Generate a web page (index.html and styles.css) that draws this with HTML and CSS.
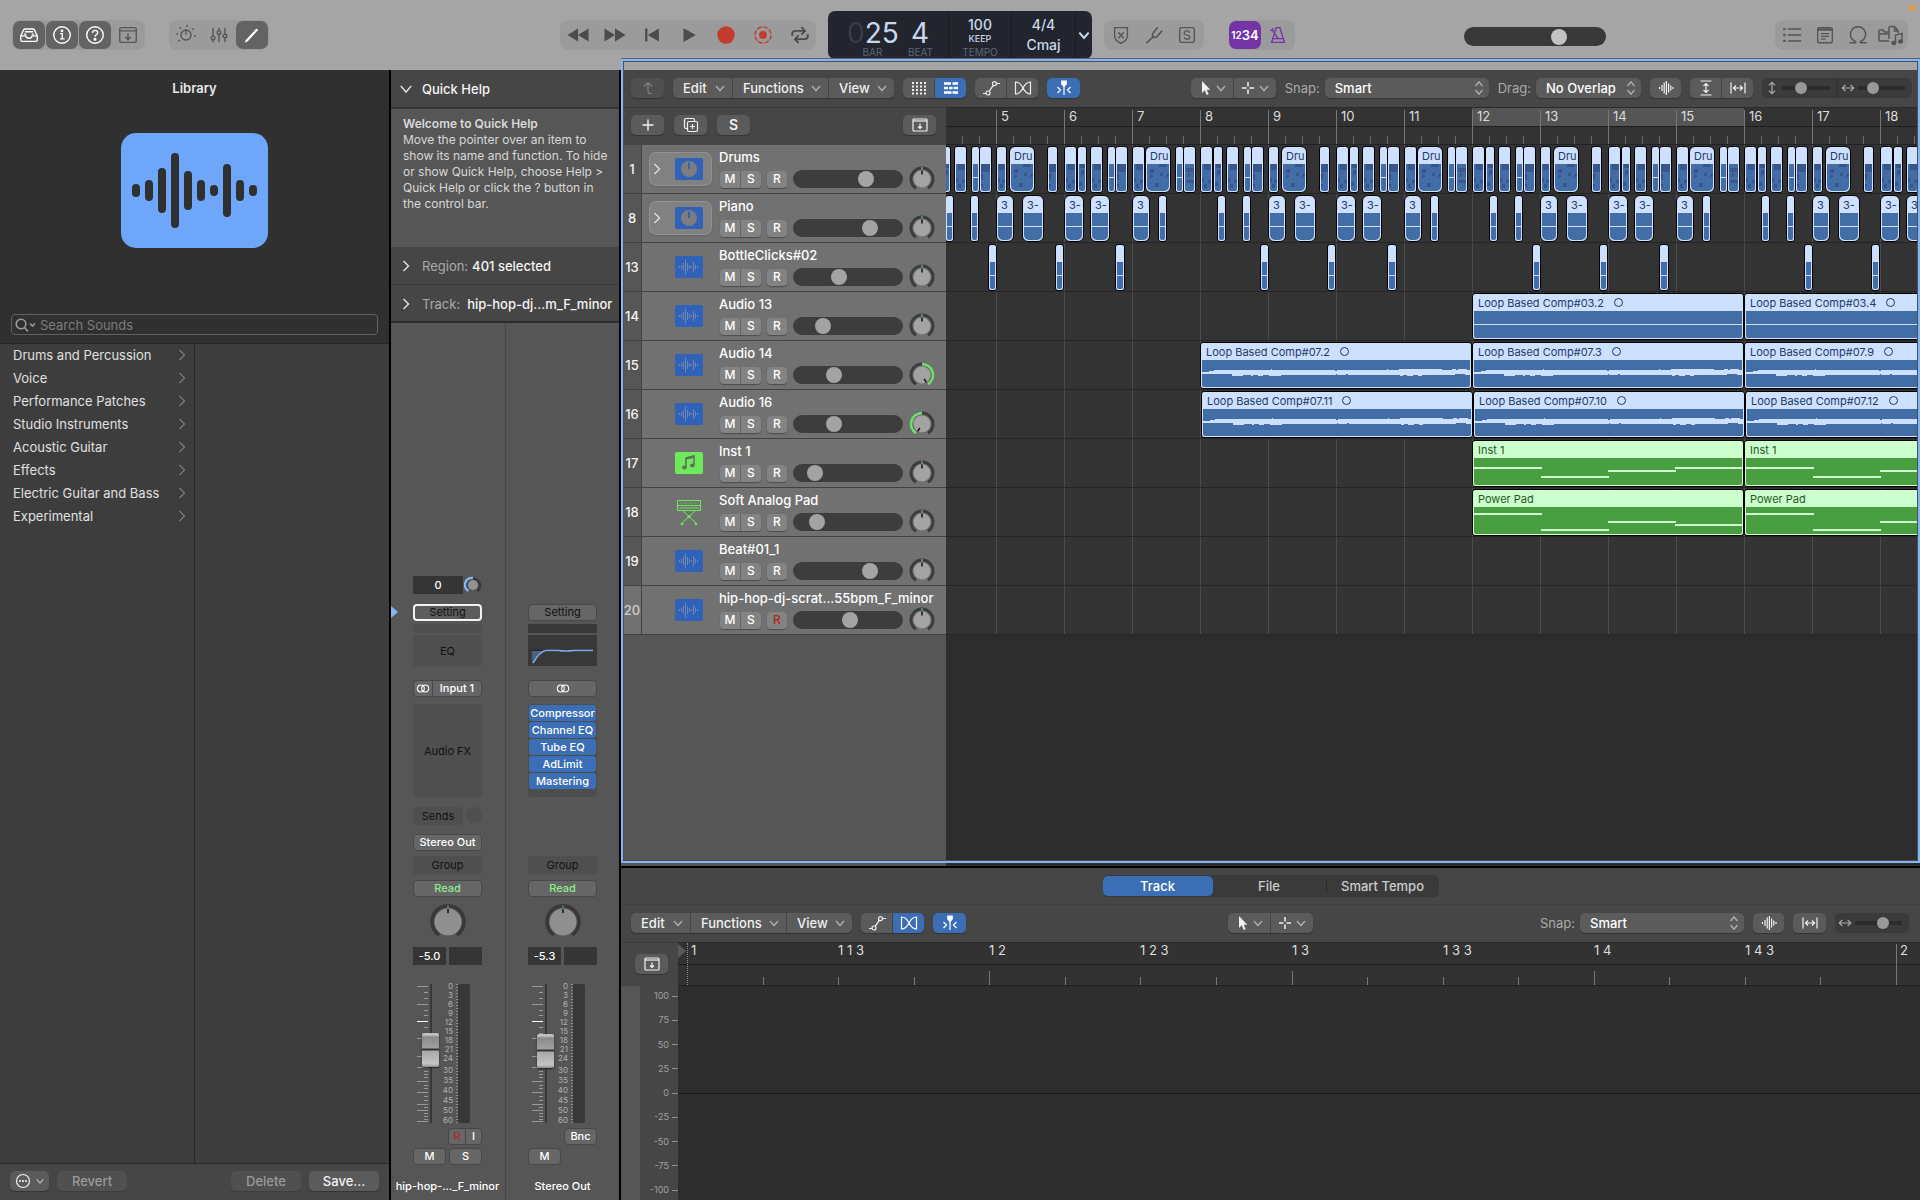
FILE: index.html
```html
<!DOCTYPE html>
<html lang="en">
<head>
<meta charset="utf-8">
<title>Studio - Tracks</title>
<link rel="stylesheet" href="styles.css">
</head>
<body>
<svg class="defs" aria-hidden="true">
  <symbol id="inbox" viewBox="0 0 24 24"><path d="M3 13 6 6.500Q6.500 5.500 7.500 5.500h9Q17.500 5.500 18 6.500L21 13v4.500q0 1.500-1.500 1.500h-15Q3 19 3 17.500ZM3 13h5.500q.5 2.500 3.500 2.500t3.500-2.500H21M7.500 8.500h9M6.500 11h2.500M15 11h2.500"/></symbol>
  <symbol id="info" viewBox="0 0 24 24"><circle cx="12" cy="12" r="9"/><path d="M10 10.500h2.300V16M9.800 16.200h5"/><circle cx="12" cy="7.500" r=".8" fill="currentColor"/></symbol>
  <symbol id="help" viewBox="0 0 24 24"><circle cx="12" cy="12" r="9"/><path d="M9.300 9.800q0-2.800 2.800-2.800t2.800 2.500q0 1.500-1.600 2.400-1.300.7-1.300 2"/><circle cx="12" cy="16.700" r=".9" fill="currentColor"/></symbol>
  <symbol id="tray" viewBox="0 0 24 24"><rect x="3" y="4" width="18" height="16" rx="2"/><path d="M3.500 7.500h17M12 10v7M9 14.300l3 3 3-3"/></symbol>
  <symbol id="smart" viewBox="0 0 24 24"><circle cx="12" cy="12" r="5.500"/><path d="M12 7v5"/><path stroke-dasharray="1.600 6.200" stroke-width="2" d="M5.200 18.800A9.800 9.800 0 1 1 18.800 18.800"/></symbol>
  <symbol id="mixer" viewBox="0 0 24 24"><path d="M5.500 4v9M5.500 17.500V20M12 4v3M12 11.500V20M18.500 4v7M18.500 15.500V20"/><circle cx="5.500" cy="15.200" r="2"/><circle cx="12" cy="9.200" r="2"/><circle cx="18.500" cy="13.200" r="2"/></symbol>
  <symbol id="pencil" viewBox="0 0 24 24"><path stroke-width="2.500" stroke-linecap="round" d="M6.500 18 17 6.500"/><path d="m5 20 1-2.500"/></symbol>
  <symbol id="rew" viewBox="0 0 24 24"><path fill="currentColor" stroke="none" d="M12 5v14L.5 12ZM23.500 5v14L12 12Z"/></symbol>
  <symbol id="ffw" viewBox="0 0 24 24"><path fill="currentColor" stroke="none" d="M12 5v14l11.500-7ZM.5 5v14L12 12Z"/></symbol>
  <symbol id="start" viewBox="0 0 24 24"><path fill="currentColor" stroke="none" d="M4.500 5h2.500v14H4.500ZM19.500 5v14L7.500 12Z"/></symbol>
  <symbol id="play" viewBox="0 0 24 24"><path fill="currentColor" stroke="none" d="M6 4.500v15L19.500 12Z"/></symbol>
  <symbol id="rec" viewBox="0 0 24 24"><circle cx="12" cy="12" r="9.500" fill="#c23b2e" stroke="none"/></symbol>
  <symbol id="rec2" viewBox="0 0 24 24"><circle cx="12" cy="12" r="4.300" fill="#c23b2e" stroke="none"/><circle cx="12" cy="12" r="8.800" stroke="#c23b2e" stroke-dasharray="5.200 1.700"/></symbol>
  <symbol id="cycle" viewBox="0 0 24 24"><path stroke-width="2" d="M3.500 13v-2q0-3.500 3.500-3.500h10M13.500 3.500l4 4-4 4M20.500 11v2q0 3.500-3.500 3.500H7M10.500 12.500l-4 4 4 4"/></symbol>
  <symbol id="down" viewBox="0 0 12 12"><path d="m2 4 4 4.500L10 4"/></symbol>
  <symbol id="fold-down" viewBox="0 0 12 12"><path d="m.8 3 5.200 6 5.200-6"/></symbol>
  <symbol id="right" viewBox="0 0 12 12"><path d="m3.500 1 5 5-5 5"/></symbol>
  <symbol id="updown" viewBox="0 0 12 16"><path d="m2.500 6 3.500-4 3.500 4M2.500 10l3.500 4 3.500-4"/></symbol>
  <symbol id="shield" viewBox="0 0 24 24"><path d="M5 4h14v9q0 5-7 8-7-3-7-8ZM9 9l6 6.500M15 9l-6 6.500"/></symbol>
  <symbol id="fork" viewBox="0 0 24 24"><path stroke-width="1.800" d="M16 3.500 11 10q-1.500 2.500.3 4t4-.3L21 7M11 14l-7.500 7"/></symbol>
  <symbol id="solo" viewBox="0 0 24 24"><rect x="4" y="4" width="16" height="16" rx="2"/><path d="M15 9.500q-.5-2-3-2t-3 2 3 2.600 3 2.600-3 2-3.200-2.200"/></symbol>
  <symbol id="metro" viewBox="0 0 24 24"><path d="M10 4h4l5 16H5ZM6.500 16h11M12 16 5.500 6M4 7.500 7 5"/></symbol>
  <symbol id="list" viewBox="0 0 24 24"><path d="M7.500 5.500H22M7.500 12H22M7.500 18.500H22"/><path stroke-width="2.500" d="M2.500 5.500H5M2.500 12H5M2.500 18.500H5"/></symbol>
  <symbol id="note" viewBox="0 0 24 24"><rect x="4" y="4" width="16" height="16.500" rx="2"/><path stroke-width="2.600" d="M4 6h16"/><path d="M7.500 10.500h9M7.500 13.500h9M7.500 16.500h5"/></symbol>
  <symbol id="loop" viewBox="0 0 24 24"><path d="M2.500 20.500H8.500q1.500 0 1-1.300A8.300 8.300 0 1 1 14.500 19.200q-.5 1.300 1 1.300h6"/></symbol>
  <symbol id="media" viewBox="0 0 28 24"><path d="M12 18H3Q2 18 2 17V8q0-1 1-1h3l1.500 2H12M2 11h10M12 16V5q0-1.500 1.500-1.500h4L21 7.500V10M17.500 3.500V8H21"/><path d="M18.500 20v-8l6.500-1.500V18"/><ellipse cx="16.800" cy="20" rx="1.800" ry="1.500" fill="currentColor"/><ellipse cx="23.500" cy="18.500" rx="1.800" ry="1.500" fill="currentColor"/></symbol>
  <symbol id="uparrow" viewBox="0 0 16 16"><path d="M12 13.500H10Q8 13.500 8 11.500V2.500M4 6.500l4-4 4 4"/></symbol>
  <symbol id="gridv" viewBox="0 0 16 16"><path stroke-width="2" stroke-dasharray="2 2" d="M1 3h15M1 6.500h15M1 10h15M1 13.500h15"/></symbol>
  <symbol id="rows" viewBox="0 0 16 16"><path stroke-width="2.600" d="M1 3.500h7M9.500 3.500H15M1 8h4M6 8h3.500M10.500 8H15M1 12.500h7.500M9.500 12.500H15"/></symbol>
  <symbol id="autom" viewBox="0 0 18 16"><path d="M1 13.500h3M7.200 11.400l4-6M14.500 3.500H18"/><circle cx="6" cy="13" r="2"/><circle cx="12.500" cy="3.700" r="2"/></symbol>
  <symbol id="flex" viewBox="0 0 18 16"><path d="M1.500 2v12Q6 14 9 8t7.500-6v12Q12 14 9 8T1.500 2Z"/></symbol>
  <symbol id="catch" viewBox="0 0 16 16"><path fill="currentColor" d="M5.800 1.200h4.400V4L8 6.500 5.800 4Z"/><path d="M8 5v10M1.500 7l3 3-3 3M14.500 7l-3 3 3 3"/></symbol>
  <symbol id="arrow" viewBox="0 0 16 16"><path fill="currentColor" stroke="none" d="M5 1v12l2.800-2.700L9.700 15l2-.8-2-4.500h3.600Z"/></symbol>
  <symbol id="cross" viewBox="0 0 16 16"><path stroke-width="1.500" d="M8 2v4.500M8 9.500V14M2 8h4.500M9.500 8H14"/></symbol>
  <symbol id="wave" viewBox="0 0 16 16"><path d="M1.500 7v2M4 5v6M6.200 2.500v11M8.400 1v14M10.600 3.500v9M12.800 5.500v5M15 7v2"/></symbol>
  <symbol id="vfit" viewBox="0 0 16 16"><path d="M2.500 1h11M2.500 15h11M8 3.500v9M5.500 6 8 3.500 10.500 6M5.500 10 8 12.500l2.500-2.500"/></symbol>
  <symbol id="hfit" viewBox="0 0 16 16"><path d="M1 2.500v11M15 2.500v11M3.500 8h9M6 5.500 3.500 8 6 10.500M10 5.500l2.500 2.500-2.500 2.500"/></symbol>
  <symbol id="vzoom" viewBox="0 0 16 16"><path stroke-width="1.400" d="M8 2v12M4.500 5 8 1.500 11.500 5M4.500 11 8 14.500l3.500-3.500"/></symbol>
  <symbol id="hzoom" viewBox="0 0 16 16"><path stroke-width="1.400" d="M2 8h12M5 4.500 1.500 8 5 11.500M11 4.500l3.500 3.500-3.500 3.500"/></symbol>
  <symbol id="plus" viewBox="0 0 16 16"><path stroke-width="1.400" d="M8 2.500v11M2.500 8h11"/></symbol>
  <symbol id="dup" viewBox="0 0 16 16"><path d="M4 11.500H3Q1.500 11.500 1.500 10V3Q1.500 1.500 3 1.500h7Q11.500 1.500 11.500 3v1M9.500 7v5M7 9.500h5"/><rect x="4.500" y="4.500" width="10" height="10" rx="1.500"/></symbol>
  <symbol id="trayw" viewBox="0 0 16 14"><rect x="1" y="1" width="14" height="12" rx="1"/><path d="M1 3h14" stroke-width="2" opacity=".6"/><path d="M8 5.500v5M6 8.500l2 2 2-2"/></symbol>
  <symbol id="search" viewBox="0 0 22 16"><circle cx="7" cy="7" r="4.800"/><path d="m10.500 10.500 3.500 4M16 6.500l2.500 2.500L21 6.500"/></symbol>
  <symbol id="more" viewBox="0 0 16 16"><circle cx="8" cy="8" r="6.500"/><path stroke-width="1.800" stroke-dasharray="1.600 1.400" d="M4.200 8h8"/></symbol>
  <symbol id="stereo" viewBox="0 0 16 10"><circle cx="5.500" cy="5" r="4"/><circle cx="10.500" cy="5" r="4"/></symbol>
  <symbol id="t-stack" viewBox="0 0 28 22"><rect width="28" height="22" rx="2" fill="#2f62b8" stroke="none"/><circle cx="14" cy="11" r="8" fill="#7d7d7d" stroke="none"/><path stroke="#2f62b8" stroke-width="2" d="M14 4.500V11"/></symbol>
  <symbol id="t-audio" viewBox="0 0 28 22"><rect width="28" height="22" rx="2" fill="#2f62b8" stroke="none"/><path stroke="#7387ad" d="M4.500 10v2M6.500 9v4M8.500 7v8M10.500 3.500v15M12.500 7v8M14.500 9v4M16.500 10v2M18.500 6v10M20.500 8.500v5M22.500 10v2"/></symbol>
  <symbol id="t-inst" viewBox="0 0 28 22"><rect width="28" height="22" rx="2" fill="#6dea5a" stroke="none"/><path stroke="#64705f" stroke-width="1.600" d="M11 15.500V6l8-2v9.500"/><path stroke="#64705f" stroke-width="2.500" d="m11 6.500 8-2"/><ellipse cx="9.300" cy="15.500" rx="2.300" ry="1.900" fill="#64705f" stroke="none"/><ellipse cx="17.300" cy="13.500" rx="2.300" ry="1.900" fill="#64705f" stroke="none"/></symbol>
  <symbol id="t-keys" viewBox="0 0 28 28"><g stroke="#6dea5a"><path d="M2.500 2.500h23v10h-23ZM2.500 7.500h23M4 10h20"/><path stroke-dasharray="1 1.500" d="M5 5h18"/><path d="m8 13 13 12M20 13 7 25"/></g><circle cx="14" cy="18.500" r="1.500" fill="#6dea5a" stroke="none"/><circle cx="7" cy="26" r="1.300" fill="#6dea5a" stroke="none"/><circle cx="21" cy="26" r="1.300" fill="#6dea5a" stroke="none"/></symbol>
  <symbol id="waveform" viewBox="0 0 270 26"><path fill="#cde0fe" stroke="none" d="M0 12h7v-1h5v-1h57v-1h1v1h63v1h2v-1h50v-1h1v1h11v-1h43v1h10v-1h4v1h2v-1h9v1h3v2h2v2h-2v1h-5v-1h-10v1h-33v1h-4v-1h-5v1h-6v-1h-4v1h-3v-1h-52v-1h-2v1h-9v-1h-1v1h-55v1h-12v-1h-6v1h-5v-1h-5v1h-2v-1h-8v1h-11v-2H0Z"/></symbol>
</svg>

<header class="control-bar">
  <div class="bar-side bar-left">
    <div class="tool-groups">
      <div class="cluster">
        <button class="cbtn on" aria-label="Library"><svg><use href="#inbox"/></svg></button>
        <button class="cbtn on" aria-label="Inspector"><svg><use href="#info"/></svg></button>
        <button class="cbtn on" aria-label="Quick Help"><svg><use href="#help"/></svg></button>
        <button class="cbtn" aria-label="Toolbar"><svg><use href="#tray"/></svg></button>
      </div>
      <div class="cluster">
        <button class="cbtn" aria-label="Smart Controls"><svg><use href="#smart"/></svg></button>
        <button class="cbtn" aria-label="Mixer"><svg><use href="#mixer"/></svg></button>
        <button class="cbtn on" aria-label="Editors"><svg><use href="#pencil"/></svg></button>
      </div>
    </div>
    <div class="cluster transport">
      <button class="cbtn" aria-label="Rewind"><svg><use href="#rew"/></svg></button>
      <button class="cbtn" aria-label="Forward"><svg><use href="#ffw"/></svg></button>
      <button class="cbtn" aria-label="Go to beginning"><svg><use href="#start"/></svg></button>
      <button class="cbtn" aria-label="Play"><svg><use href="#play"/></svg></button>
      <button class="cbtn" aria-label="Record"><svg><use href="#rec"/></svg></button>
      <button class="cbtn" aria-label="Capture recording"><svg><use href="#rec2"/></svg></button>
      <button class="cbtn" aria-label="Cycle"><svg><use href="#cycle"/></svg></button>
    </div>
  </div>
  <div class="lcd">
    <div class="lcd-pos">
      <span class="digits"><span class="ghost">0</span>25</span><span class="digits">4</span>
      <span class="cap">BAR</span><span class="cap">BEAT</span>
    </div>
    <div class="lcd-cell"><span class="mid">100</span><span class="keep">KEEP</span><span class="cap">TEMPO</span></div>
    <div class="lcd-cell sig"><span class="mid">4/4</span><span class="mid">Cmaj</span></div>
    <button class="lcd-more" aria-label="Display mode"><svg><use href="#down"/></svg></button>
  </div>
  <div class="bar-side">
    <div class="cluster trio">
      <button class="cbtn" aria-label="Replace"><svg><use href="#shield"/></svg></button>
      <button class="cbtn" aria-label="Tuner"><svg><use href="#fork"/></svg></button>
      <button class="cbtn" aria-label="Solo"><svg><use href="#solo"/></svg></button>
    </div>
    <div class="cluster count">
      <button class="cbtn countin" aria-label="Count-in"><small>12</small>34</button>
      <button class="cbtn metro" aria-label="Metronome"><svg><use href="#metro"/></svg></button>
    </div>
    <input class="master" type="range" min="0" max="100" value="70" aria-label="Master volume">
    <div class="cluster right-tools">
      <button class="cbtn" aria-label="List editors"><svg><use href="#list"/></svg></button>
      <button class="cbtn" aria-label="Note pads"><svg><use href="#note"/></svg></button>
      <button class="cbtn" aria-label="Loop browser"><svg><use href="#loop"/></svg></button>
      <button class="cbtn" aria-label="Browsers"><svg><use href="#media"/></svg></button>
    </div>
  </div>
  <span class="mic-dot"></span>
</header>

<main class="workspace">
  <aside class="library">
    <h2>Library</h2>
    <svg class="patch-art" viewBox="0 0 147 115" aria-hidden="true"><rect width="147" height="115" rx="15" fill="#6ea6fa"/><g stroke="#303030" stroke-width="8" stroke-linecap="round"><path d="M15 55v5M28 51v13M41 39v37M54 24v67M67 42v31M80 51v13M93 56v3M106 35v45M119 51v13M132 56v3"/></g></svg>
    <label class="search"><svg><use href="#search"/></svg><input type="search" placeholder="Search Sounds" aria-label="Search Sounds"></label>
    <div class="browser">
      <ul class="cats">
        <li><a href="#">Drums and Percussion<svg><use href="#right"/></svg></a></li>
        <li><a href="#">Voice<svg><use href="#right"/></svg></a></li>
        <li><a href="#">Performance Patches<svg><use href="#right"/></svg></a></li>
        <li><a href="#">Studio Instruments<svg><use href="#right"/></svg></a></li>
        <li><a href="#">Acoustic Guitar<svg><use href="#right"/></svg></a></li>
        <li><a href="#">Effects<svg><use href="#right"/></svg></a></li>
        <li><a href="#">Electric Guitar and Bass<svg><use href="#right"/></svg></a></li>
        <li><a href="#">Experimental<svg><use href="#right"/></svg></a></li>
      </ul>
    </div>
    <footer class="lib-foot">
      <button class="btn more" aria-label="Actions"><svg class="i16"><use href="#more"/></svg><svg class="i12"><use href="#down"/></svg></button>
      <button class="btn wide" disabled>Revert</button>
      <button class="btn wide push" disabled>Delete</button>
      <button class="btn wide">Save...</button>
    </footer>
  </aside>

  <aside class="inspector">
    <section class="fold"><svg><use href="#fold-down"/></svg><b>Quick Help</b></section>
    <section class="help-text"><b>Welcome to Quick Help</b><br>Move the pointer over an item to show its name and function. To hide or show Quick Help, choose Help &gt; Quick Help or click the ? button in the control bar.</section>
    <section class="fold"><svg><use href="#right"/></svg><span>Region:</span><b>401 selected</b></section>
    <section class="fold last"><svg><use href="#right"/></svg><span>Track:</span><b class="tname">hip-hop-dj...m_F_minor</b></section>
    <div class="strips">
      <div class="strip">
        <div class="row gain-row"><span class="val gain">0</span><svg class="mini" viewBox="0 0 18 18"><path d="M4.500 15A7 7 0 1 1 13.500 15" stroke="#383838"/><path d="M4.500 15A7 7 0 0 1 9 2" stroke="#84b4f4"/><circle cx="9" cy="9" r="5" fill="#929292"/></svg></div>
        <button class="sbtn setting focus">Setting</button>
        <div class="thin"></div>
        <button class="well eq">EQ</button>
        <div class="row io"><button class="sbtn fmt" aria-label="Mono or stereo"><svg><use href="#stereo"/></svg></button><button class="sbtn input">Input 1</button></div>
        <button class="well fx">Audio FX</button>
        <div class="row sends"><button class="well send">Sends</button><span class="send-knob"></span></div>
        <button class="sbtn out">Stereo Out</button>
        <button class="well group">Group</button>
        <button class="sbtn read">Read</button>
        <svg class="pan" viewBox="0 0 36 36"><use href="#pan"/></svg>
        <div class="row vals"><span class="val">-5.0</span><span class="val"></span></div>
        <div class="fader" data-level="56"></div>
        <div class="row pair ri"><button class="sbtn rec">R</button><button class="sbtn">I</button></div>
        <div class="row pair ms"><button class="sbtn">M</button><button class="sbtn">S</button></div>
        <div class="sname">hip-hop-..._F_minor</div>
      </div>
      <div class="strip">
        <div class="row gain-row"></div>
        <button class="sbtn setting">Setting</button>
        <div class="thin dark"></div>
        <svg class="eq curve" viewBox="0 0 69 31"><path d="M4 16h61" stroke="#111"/><path d="M4 28V16h13Q10 18 4 28Z" fill="#4a6384"/><path d="M5 28Q12 16 18 15.500h12q8 1 16 0h19" stroke="#7eaef0" fill="none" stroke-width="1.500"/></svg>
        <button class="sbtn io" aria-label="Stereo"><svg><use href="#stereo"/></svg></button>
        <div class="fx inserts"><button>Compressor</button><button>Channel EQ</button><button>Tube EQ</button><button>AdLimit</button><button>Mastering</button></div>
        <div class="row sends"></div>
        <div class="out"></div>
        <button class="well group">Group</button>
        <button class="sbtn read">Read</button>
        <svg class="pan" viewBox="0 0 36 36"><use href="#pan"/></svg>
        <div class="row vals"><span class="val">-5.3</span><span class="val"></span></div>
        <div class="fader" data-level="55"></div>
        <div class="row pair ri end"><button class="sbtn">Bnc</button></div>
        <div class="row pair ms"><button class="sbtn">M</button></div>
        <div class="sname">Stereo Out</div>
      </div>
    </div>
  </aside>
  <svg class="defs"><symbol id="pan" viewBox="0 0 36 36"><path d="M9 31A16 16 0 1 1 27 31" stroke="#383838" stroke-width="3.500"/><circle cx="18" cy="18" r="13.500" fill="#8f8f8f" stroke="none"/><path d="M18 1v4" stroke="#5fa45f"/><path d="M18 5v4" stroke="#111" stroke-width="1.500"/></symbol></svg>

  <div class="content">
    <section class="tracks-pane">
      <div class="toolbar">
        <button class="btn sq dim" aria-label="Up"><svg class="i16"><use href="#uparrow"/></svg></button>
        <div class="seg menus"><button class="m1">Edit<svg class="i12"><use href="#down"/></svg></button><button class="m2">Functions<svg class="i12"><use href="#down"/></svg></button><button class="m3">View<svg class="i12"><use href="#down"/></svg></button></div>
        <div class="seg duo"><button aria-label="Grid view"><svg class="i16"><use href="#gridv"/></svg></button><button class="blue" aria-label="Track view"><svg class="i16"><use href="#rows"/></svg></button></div>
        <div class="seg duo"><button aria-label="Automation"><svg class="i18"><use href="#autom"/></svg></button><button aria-label="Flex"><svg class="i18"><use href="#flex"/></svg></button></div>
        <button class="btn sq blue" aria-label="Catch playhead"><svg class="i16"><use href="#catch"/></svg></button>
        <div class="seg tools push"><button aria-label="Pointer tool"><svg class="i16"><use href="#arrow"/></svg><svg class="i12"><use href="#down"/></svg></button><button aria-label="Alternate tool"><svg class="i16"><use href="#cross"/></svg><svg class="i12"><use href="#down"/></svg></button></div>
        <div class="field"><label for="snap1">Snap:</label><span class="sel wide-sel"><select id="snap1"><option>Smart</option></select><svg><use href="#updown"/></svg></span></div>
        <div class="field"><label for="drag">Drag:</label><span class="sel"><select id="drag"><option>No Overlap</option></select><svg><use href="#updown"/></svg></span></div>
        <button class="btn sq31" aria-label="Waveform zoom"><svg class="i16"><use href="#wave"/></svg></button>
        <div class="seg duo"><button aria-label="Fit vertically"><svg class="i16"><use href="#vfit"/></svg></button><button aria-label="Fit horizontally"><svg class="i16"><use href="#hfit"/></svg></button></div>
        <div class="zoom"><span><svg><use href="#vzoom"/></svg><input type="range" value="36" aria-label="Vertical zoom"></span><span><svg><use href="#hzoom"/></svg><input type="range" value="26" aria-label="Horizontal zoom"></span></div>
      </div>
      <div class="arrange">
        <div class="heads">
          <div class="head-tools">
            <button class="btn sq" aria-label="Add track"><svg class="i16"><use href="#plus"/></svg></button>
            <button class="btn sq" aria-label="Duplicate track"><svg class="i16"><use href="#dup"/></svg></button>
            <button class="btn sq solo">S</button>
            <button class="btn sq push" aria-label="Header options"><svg class="i16"><use href="#trayw"/></svg></button>
          </div>
          <div id="heads"></div>
        </div>
        <div class="timeline">
          <div class="ruler" id="ruler"></div>
          <div class="lanes" id="lanes"></div>
        </div>
      </div>
    </section>

    <section class="editor">
      <div class="tabs"><div class="tabset"><button class="active">Track</button><button>File</button><button>Smart Tempo</button></div></div>
      <div class="toolbar ed-bar">
        <div class="side">
          <div class="seg menus"><button class="m1">Edit<svg class="i12"><use href="#down"/></svg></button><button class="m2">Functions<svg class="i12"><use href="#down"/></svg></button><button class="m3">View<svg class="i12"><use href="#down"/></svg></button></div>
          <div class="seg duo"><button aria-label="Automation"><svg class="i18"><use href="#autom"/></svg></button><button class="blue" aria-label="Flex"><svg class="i18"><use href="#flex"/></svg></button></div>
          <button class="btn sq blue" aria-label="Catch playhead"><svg class="i16"><use href="#catch"/></svg></button>
        </div>
        <div class="seg tools"><button aria-label="Pointer tool"><svg class="i16"><use href="#arrow"/></svg><svg class="i12"><use href="#down"/></svg></button><button aria-label="Alternate tool"><svg class="i16"><use href="#cross"/></svg><svg class="i12"><use href="#down"/></svg></button></div>
        <div class="side end">
          <div class="field"><label for="snap2">Snap:</label><span class="sel wide-sel"><select id="snap2"><option>Smart</option></select><svg><use href="#updown"/></svg></span></div>
          <button class="btn sq31" aria-label="Waveform zoom"><svg class="i16"><use href="#wave"/></svg></button>
          <button class="btn sq" aria-label="Fit horizontally"><svg class="i16"><use href="#hfit"/></svg></button>
          <div class="zoom one"><span><svg><use href="#hzoom"/></svg><input type="range" value="62" aria-label="Horizontal zoom"></span></div>
        </div>
      </div>
      <div class="ed-grid">
        <div class="ed-corner"><button class="btn sq" aria-label="Header options"><svg class="i16"><use href="#trayw"/></svg></button></div>
        <div class="ed-ruler" id="edruler"></div>
        <div class="ed-scale"><ol id="edscale"></ol></div>
        <div class="ed-wave"></div>
      </div>
    </section>
  </div>
</main>
<script src="script.js"></script>
</body>
</html>
```
FILE: styles.css
```css
* { box-sizing: border-box; }
body { margin: 0; min-height: 100vh; display: flex; flex-direction: column; background: #000; color: #e4e4e4; font: 13px/16px Inter, "Liberation Sans", sans-serif; overflow: hidden; }
button, input, select { font: inherit; color: inherit; margin: 0; padding: 0; border: 0; background: none; }
button { display: flex; align-items: center; justify-content: center; white-space: nowrap; }
svg { display: block; flex: none; fill: none; stroke: currentColor; }
.defs { position: absolute; width: 0; height: 0; }
.push { margin-left: auto; }
.i12 { width: 12px; height: 12px; stroke-width: 1.5; }
.i16 { width: 16px; height: 16px; stroke-width: 1.2; }
.i18 { width: 18px; height: 16px; stroke-width: 1.2; }

/* Control bar */
.control-bar { position: relative; height: 70px; background: #a5a5a5; display: grid; grid-template-columns: 1fr 264px 1fr; gap: 12px; align-items: center; padding: 0 12px; }
.bar-side { display: flex; align-items: center; min-width: 0; }
.bar-left { justify-content: space-between; }
.tool-groups { display: flex; gap: 24px; }
.cluster { display: flex; align-items: center; height: 30px; border-radius: 8px; background: #9b9b9b; gap: 1px; padding: 1px; color: #555; }
.cbtn { width: 32px; height: 28px; border-radius: 7px; flex: none; }
.cbtn svg { width: 22px; height: 22px; stroke-width: 1.5; }
.cbtn.on { background: #636363; color: #fff; }
.transport { width: 256px; gap: 5px; padding: 0 0 0 2px; color: #4c4c4c; }
.transport svg { width: 22px; height: 22px; }
.trio { width: 100px; }
.count { margin-left: 25px; width: 66px; padding-left: 0; }
.countin { background: #7434a6; color: #fff; font-weight: 600; }
.countin small { font-size: 10px; }
.metro { color: #7434a6; }
.master { appearance: none; width: 142px; height: 19px; border-radius: 10px; background: #393939; margin: 3px auto 0; padding: 0 2px; }
.master::-webkit-slider-thumb { appearance: none; width: 16px; height: 16px; border-radius: 50%; background: #c2c2c2; }
.right-tools { width: 133px; }
.right-tools .cbtn:last-child svg { width: 28px; height: 24px; }
.mic-dot { position: absolute; right: 5px; top: 5px; width: 6px; height: 6px; border-radius: 50%; background: #e8993a; }
.lcd { height: 48px; border-radius: 7px; background: #22252e; display: grid; grid-template-columns: 120px 63px 64px 17px; color: #c8d8ec; overflow: hidden; }
.lcd > * + * { border-left: 1px solid #181a21; }
.lcd-pos { display: grid; grid-template: 34px 13px / 51px 24px; column-gap: 10px; padding-left: 19px; text-align: center; }
.digits { font-size: 28px; line-height: 44px; text-align: center; white-space: nowrap; }
.ghost { color: #383c48; }
.cap { font-size: 10px; line-height: 14px; color: #5b6678; }
.lcd-cell { display: flex; flex-direction: column; align-items: center; padding-top: 5px; }
.mid { font-size: 14px; line-height: 17px; font-weight: 500; }
.keep { font-size: 9px; line-height: 12px; font-weight: 500; }
.sig { gap: 3px; }
.lcd-more svg { width: 14px; height: 14px; stroke-width: 1.8; }

.workspace { flex: 1; display: grid; grid-template-columns: 389px 228px minmax(0, 1fr); column-gap: 2px; }

/* Library */
.library { background: #303030; display: flex; flex-direction: column; }
h2 { margin: 10px 0 37px; font-size: 13px; line-height: 16px; font-weight: 600; text-align: center; color: #e8e8e8; }
.patch-art { width: 147px; height: 115px; align-self: center; stroke: none; }
.search { margin: 66px 11px 8px; height: 21px; border: 1px solid #606060; border-radius: 4px; display: flex; align-items: center; gap: 4px; padding: 0 2px; color: #9a9a9a; }
.search svg { width: 22px; height: 16px; stroke-width: 1.6; }
.search input { flex: 1; outline: 0; }
.search input::placeholder { color: #7c7c7c; opacity: 1; }
.browser { flex: 1; background: #3d3d3d; border-top: 1px solid #272727; display: flex; }
.cats { list-style: none; margin: 0; padding: 0 6px 0 13px; width: 195px; border-right: 1px solid #272727; }
.cats a { display: flex; justify-content: space-between; align-items: center; height: 23px; padding-bottom: 2px; color: #e0e0e0; text-decoration: none; white-space: nowrap; }
.cats svg { width: 12px; height: 14px; stroke: #a8a8a8; }
.lib-foot { height: 37px; background: #464646; border-top: 1px solid #2a2a2a; display: flex; align-items: center; gap: 8px; padding: 0 10px 2px; }
.btn { height: 20px; border-radius: 5px; background: #5b5b5b; box-shadow: 0 1px 1px #333; color: #f2f2f2; flex: none; }
.btn.more { width: 39px; gap: 4px; }
.btn.more .i12 { width: 10px; stroke: #bbb; }
.btn.wide { width: 70px; font-weight: 500; }
.btn:disabled { background: #505050; color: #9a9a9a; box-shadow: 0 1px 1px #3c3c3c; }

/* Inspector */
.inspector { background: #565656; display: flex; flex-direction: column; }
.fold { height: 37px; background: #464646; display: flex; align-items: center; padding-left: 9px; color: #f4f4f4; }
.fold svg { width: 12px; height: 14px; stroke-width: 1.5; margin-right: 10px; stroke: #ddd; }
.fold b { font-weight: 500; }
.fold span { color: #aaa; margin-right: 4px; }
.fold .tname { margin-left: 3px; }
.fold.last { height: 39px; border-top: 1px solid #3a3a3a; border-bottom: 2px solid #2c2c2c; padding-top: 2px; }
.help-text { height: 140px; border-top: 2px solid #333; padding: 7px 8px 0 12px; font-size: 12px; line-height: 16px; color: #d8d8d8; }
.help-text b { font-weight: 600; }
.strips { flex: 1; display: grid; grid-template-columns: 1fr 1fr; }
.strip { display: flex; flex-direction: column; justify-content: flex-end; padding: 0 23px 6px 22px; color: #fff; font-size: 11px; }
.strip + .strip { border-left: 1px solid #444; padding-right: 22px; }
.strip > * { flex: none; }
.row { display: flex; justify-content: space-between; }
.val { background: #353535; width: 33px; height: 18px; line-height: 18px; text-align: center; font-weight: 500; }
.gain-row { height: 18px; }
.gain { width: 50px; }
.mini { width: 18px; height: 18px; stroke-width: 2.5; }
.mini circle { stroke: none; }
.sbtn { height: 17px; border-radius: 4px; background: #666; border: 1px solid #484848; font-weight: 500; padding-bottom: 1px; }
.setting { height: 17px; margin: 10px 0 3px; color: #111; font-weight: 400; }
.focus { border: 2px solid #f2f2f2; background: #5c5c5c; }
.strip:first-child .setting { position: relative; }
.strip:first-child .setting::before { content: ""; position: absolute; left: -24px; top: 0; border: 6px solid transparent; border-left: 7px solid #84b4f4; border-right: 0; }
.thin { height: 9px; background: #505050; margin-bottom: 2px; }
.thin.dark { background: #383838; }
.well { background: #4f4f4f; color: #111; border-radius: 3px; }
.eq { height: 31px; margin-bottom: 14px; }
.curve { width: 100%; background: #383838; stroke: none; }
.io { height: 17px; margin-bottom: 7px; }
.io svg, .fmt svg { width: 14px; height: 9px; stroke-width: 1.2; }
.fmt { width: 19px; border-radius: 4px 0 0 4px; border-right: 0; }
.input { flex: 1; border-radius: 0 4px 4px 0; }
.fx { height: 93px; margin-bottom: 10px; }
.inserts { background: #4d4d4d; border-radius: 4px; padding: 1px; display: flex; flex-direction: column; gap: 1px; }
.inserts button { height: 16px; background: #3c6eb6; border-radius: 3px; font-weight: 500; }
.sends { height: 18px; margin-bottom: 9px; }
.send { width: 50px; border-radius: 4px; }
.send-knob { width: 16px; height: 16px; border-radius: 50%; background: #4f4f4f; }
.out { height: 17px; margin-bottom: 5px; }
.group { height: 18px; margin-bottom: 6px; }
.read { color: #8dee8d; margin-bottom: 7px; }
.pan { width: 36px; height: 36px; align-self: center; margin-bottom: 7px; }
.vals { margin-bottom: 19px; }
.fader { height: 139px; margin-bottom: 5px; display: grid; grid-template: 139px / 25px 16px 4px 12px; align-items: stretch; }
.fader .ticks, .fader input { grid-area: 1 / 1; }
.ticks { width: 25px; height: 139px; }
.fader input { appearance: none; writing-mode: vertical-lr; direction: rtl; width: 17px; height: 139px; margin-left: 9px; background: linear-gradient(#383838, #383838) center / 2px 100% no-repeat; }
.fader input::-webkit-slider-thumb { appearance: none; width: 17px; height: 34px; border-radius: 2px; background: linear-gradient(#c0c0c0 0 2px, #8a8a8a 4px, #a0a0a0 15px, #333 16px 17px, #a8a8a8 18px, #c4c4c4 31px, #888); box-shadow: 0 1px 2px #222; }
.nums { display: flex; flex-direction: column; list-style: none; margin: -2px 0 0; padding: 0 1px 0 0; text-align: right; font-size: 8px; line-height: 9px; color: #b0b0b0; }
.nums li { flex: none; height: 9px; }
.nums .lo { line-height: 10px; height: 10px; }
.nums .gap { margin-top: 2px; }
.dots { background: repeating-linear-gradient(#8a8a8a 0 1px, transparent 1px 3px) right / 2px 100% no-repeat; }
.meter { background: #383838; border-radius: 2px; }
.pair .sbtn { width: 33px; }
.ri { margin-bottom: 3px; justify-content: flex-end; }
.ri .sbtn { width: 17px; border-radius: 0 4px 4px 0; }
.ri .sbtn.rec { border-radius: 4px 0 0 4px; color: #b32c20; border-right: 0; }
.ri.end .sbtn { width: 33px; border-radius: 4px; }
.sname { margin: 13px -21px 0; line-height: 16px; text-align: center; font-weight: 500; }

/* Toolbars */
.content { display: grid; grid-template-rows: 1fr 332px; row-gap: 2px; min-width: 0; }
.toolbar { height: 37px; background: #464646; display: flex; align-items: center; gap: 9px; padding: 0 8px 1px 10px; }
.sq { width: 33px; }
.sq31 { width: 31px; }
.dim { background: #505050; color: #808080; }
.blue, .seg .blue { background: #3c6eb6; color: #fff; }
.seg { display: flex; gap: 1px; height: 20px; border-radius: 5px; overflow: hidden; background: #444; box-shadow: 0 1px 1px #333; flex: none; }
.seg button { background: #5b5b5b; color: #f0f0f0; font-weight: 500; }
.seg .i12 { stroke: #aaa; }
.duo button { width: 31px; }
.menus button { justify-content: space-between; padding: 0 6px 0 10px; }
.m1 { width: 59px; }
.m2 { width: 95px; }
.m3 { width: 65px; }
.tools button { width: 42px; gap: 2px; }
.field { display: flex; align-items: center; gap: 5px; color: #aaa; }
.sel { display: flex; align-items: center; width: 105px; height: 20px; border-radius: 5px; background: #5b5b5b; box-shadow: 0 1px 1px #333; }
.wide-sel { width: 164px; }
.sel select { appearance: none; flex: 1; height: 20px; padding-left: 10px; color: #fff; font-weight: 500; outline: 0; min-width: 0; }
.sel svg { width: 12px; height: 16px; margin-right: 4px; stroke: #aaa; stroke-width: 1.5; }
.zoom { display: flex; height: 20px; width: 150px; background: #3b3b3b; border-radius: 5px; flex: none; }
.zoom span { flex: 1; display: flex; align-items: center; gap: 3px; padding: 0 7px 0 3px; color: #aaa; }
.zoom span + span { border-left: 1px solid #303030; }
.zoom svg { width: 14px; height: 14px; }
.zoom input { appearance: none; flex: 1; min-width: 0; width: 45px; height: 12px; background: linear-gradient(#2c2c2c, #2c2c2c) center / 100% 4px no-repeat; }
.zoom input::-webkit-slider-thumb { appearance: none; width: 12px; height: 12px; border-radius: 50%; background: #999; }
.zoom.one { width: 74px; }

/* Tracks */
.tracks-pane { position: relative; background: #2d2d2d; display: flex; flex-direction: column; }
.tracks-pane::after { content: ""; position: absolute; inset: -11px 0 3px 0; border: 2px solid #84b4f4; box-shadow: 0 -1px 0 #5c6470, inset 0 0 0 1px #4a5058; pointer-events: none; }
.arrange { flex: 1; display: grid; grid-template-columns: 325px minmax(0, 1fr); }
.heads { background: #565656; }
.head-tools { height: 38px; background: #464646; border-top: 1px solid #3c3c3c; display: flex; align-items: center; gap: 10px; padding: 0 10px 3px; }
.solo { font-size: 14px; font-weight: 600; }
.track { height: 49px; display: grid; grid-template-columns: 19px 1fr; padding-left: 2px; border-bottom: 1px solid #424242; }
.tnum { display: flex; align-items: center; justify-content: center; font-weight: 500; color: #f4f4f4; border-right: 1px solid #424242; }
.track.current .tnum { background: #717171; color: #ccc; }
.tbody { background: #717171; display: grid; grid-template-columns: 61px 228px; column-gap: 8px; padding-left: 8px; color: #fff; }
.ticon { height: 32px; margin-top: 8px; border-radius: 6px; display: flex; align-items: center; justify-content: flex-end; gap: 14px; padding-right: 8px; color: #ddd; }
.ticon svg { width: 28px; height: 22px; stroke-width: 1; }
.ticon svg.chev { width: 12px; height: 14px; stroke-width: 1.4; margin-right: -2px; }
.ticon svg.tall { height: 28px; }
.ticon.stack { background: #818181; box-shadow: 0 0 0 1px #919191, 0 1px 2px #444; }
.tinfo { padding-top: 4px; }
.tlabel { font-size: 13px; line-height: 16px; font-weight: 500; margin-bottom: 5px; white-space: nowrap; }
.tctl { display: flex; align-items: center; height: 18px; }
.msr { display: flex; gap: 1px; height: 17px; border-radius: 4px; overflow: hidden; background: #666; box-shadow: 0 1px 1px #4c4c4c; margin: 0 6px 0 1px; }
.msr button { width: 20px; background: #838383; font-weight: 500; font-size: 12px; }
.msr .armed { color: #ad2a20; }
.msr + .msr { margin-left: 0; }
.tctl input { appearance: none; width: 110px; height: 18px; padding: 0 1px; border-radius: 9px; background: #3d3d3d; flex: none; }
.tctl input::-webkit-slider-thumb { appearance: none; width: 16px; height: 16px; border-radius: 50%; background: #a3a3a3; }
.tpan { width: 26px; height: 26px; margin-left: 6px; stroke-width: 3; }

.timeline { overflow: hidden; }
.ruler { position: relative; height: 38px; background: linear-gradient(#333 18px, #1d1d1d 18px 19px, #333 19px); border-bottom: 1px solid #222; border-top: 1px solid #2a2a2a; }
.ruler .cyc { position: absolute; top: 0; height: 18px; background: #555; }
.ruler .bar { position: absolute; top: 2px; bottom: 0; border-left: 1px solid #777; padding-left: 4px; font-size: 13px; line-height: 12px; color: #ddd; width: 67px; background: repeating-linear-gradient(90deg, transparent 0 16px, #6a6a6a 16px 17px) 0 100% / 60px 8px no-repeat; }
.lane { position: relative; height: 49px; border-bottom: 1px solid #262626; background: linear-gradient(90deg, #4c4c4c 1px, #333 1px) 50px 0 / 68px 100%; overflow: hidden; }
.reg { position: absolute; top: 1px; height: 47px; border: 1px solid #000; border-radius: 3px; background: #cde0fe; padding: 0 1px 1px; overflow: hidden; color: #1e3a68; font-size: 11px; line-height: 14px; white-space: nowrap; }
.reg.round { border-radius: 6px; }
.reg .nm { height: 17px; padding: 0 0 0 4px; display: flex; align-items: center; gap: 10px; }
.reg.round .nm { padding-left: 3px; }
.nm i { width: 9px; height: 9px; border: 1px solid #1e3a68; border-radius: 50%; }
.body { height: 27px; background-color: #436da6; background-repeat: no-repeat; border-radius: 0 0 2px 2px; overflow: hidden; }
.round .body { border-radius: 0 0 5px 5px; }
.body svg { width: 270px; height: 26px; }
.k-line, .k-flat { background-image: linear-gradient(#cde0fe, #cde0fe); background-size: 100% 1px; background-position: 0 13px; }
.k-a { background-image: linear-gradient(#38568a, #38568a), linear-gradient(#38568a, #38568a), linear-gradient(#38568a, #38568a), linear-gradient(#38568a, #38568a); background-size: 80% 6px, 2px 4px, 3px 4px, 3px 3px; background-position: 100% 0, 0 14px, 2px 20px, 100% 16px; }
.k-b { background-image: linear-gradient(#38568a, #38568a), linear-gradient(#38568a, #38568a), linear-gradient(#38568a, #38568a); background-size: 5px 4px, 3px 5px, 3px 4px; background-position: 100% 0, 80% 6px, 0 18px; }
.k-t { background-image: linear-gradient(#38568a, #38568a), linear-gradient(#38568a, #38568a), linear-gradient(#38568a, #38568a); background-size: 100% 8px, 2px 7px, 2px 3px; background-position: 0 0, 0 9px, 0 20px; }
.k-n { background-image: repeating-linear-gradient(90deg, transparent 0 3px, #38568a 3px 5px), linear-gradient(#38568a, #38568a), linear-gradient(#38568a, #38568a); background-size: 100% 4px, 9px 4px, 9px 3px; background-position: 0 9px, 1px 4px, 2px 16px; }
.k-d { background-image: linear-gradient(#38568a, #38568a), linear-gradient(#38568a, #38568a), linear-gradient(#38568a, #38568a), linear-gradient(#38568a, #38568a), linear-gradient(#38568a, #38568a), linear-gradient(#38568a, #38568a); background-size: 8px 3px, 4px 4px, 3px 3px, 4px 4px, 3px 3px, 3px 3px; background-position: 12px 0, 3px 5px, 3px 11px, 8px 19px, 13px 9px, 100% 10px; }
.reg.green { background: #ccffcd; color: #1f5a1c; }
.green .body { background-color: #4a9e42; }
.green svg { stroke: #ccffcd; stroke-width: 2; }

/* Audio track editor */
.editor { background: #464646; display: flex; flex-direction: column; min-width: 0; }
.tabs { height: 37px; display: flex; justify-content: center; align-items: center; border-bottom: 1px solid #3e3e3e; padding-bottom: 1px; }
.tabset { display: grid; grid-template-columns: 110px 113px 113px; height: 22px; background: #3a3a3a; border-radius: 5px; color: #ccc; align-items: center; }
.tabset button { height: 20px; font-weight: 500; }
.tabset button:last-child { height: 14px; border-left: 1px solid #2a2a2a; }
.tabset .active { background: #3c6eb6; color: #fff; border-radius: 5px; }
.ed-bar { display: grid; grid-template-columns: 1fr auto 1fr; padding-right: 11px; }
.side { display: flex; gap: 9px; align-items: center; }
.side.end { justify-content: flex-end; }
.ed-grid { flex: 1; display: grid; grid-template: 44px 1fr / 57px minmax(0, 1fr); }
.ed-corner { padding: 11px 0 0 14px; border-top: 1px solid #3c3c3c; }
.ed-ruler { position: relative; overflow: hidden; background: linear-gradient(#323232 21px, #1a1a1a 21px 22px, #323232 22px); border-top: 1px solid #2a2a2a; border-bottom: 1px solid #202020; }
.ed-ruler::before { content: ""; position: absolute; left: 0; top: 1px; border: 7px solid transparent; border-left: 8px solid #5a5a5a; border-right: 0; }
.etick { position: absolute; bottom: 0; height: 8px; border-left: 1px solid #777; }
.etick.long { height: 14px; }
.etick.full { height: 41px; }
.etick.first { height: 42px; border-left: 1px dotted #888; }
.elabel { position: absolute; top: 0; line-height: 14px; white-space: pre; color: #ddd; }
.ed-scale { border-left: 19px solid #565656; overflow: hidden; }
.ed-scale ol { list-style: none; margin: 0; padding: 0; height: 214px; display: flex; flex-direction: column; justify-content: space-between; font-size: 9px; line-height: 20px; color: #a0a0a0; }
.ed-scale li { display: flex; align-items: center; justify-content: flex-end; gap: 3px; height: 20px; }
.ed-scale li::after { content: ""; width: 6px; height: 1px; background: #909090; }
.ed-wave { background: linear-gradient(#1a1a1a, #1a1a1a) 0 107px / 100% 1px no-repeat #2d2d2d; }
```
FILE: script.js
```js
const icon = (id, cls = '') => `<svg class="${cls}"><use href="#${id}"/></svg>`;

// Track list: number, name, icon, fader position, pan
const tracks = [
  [1, 'Drums', 't-stack', 64, 0],
  [8, 'Piano', 't-stack', 68, 0],
  [13, 'BottleClicks#02', 't-audio', 37, 0],
  [14, 'Audio 13', 't-audio', 21, 0],
  [15, 'Audio 14', 't-audio', 32, 1],
  [16, 'Audio 16', 't-audio', 32, -1],
  [17, 'Inst 1', 't-inst', 13, 0],
  [18, 'Soft Analog Pad', 't-keys', 15, 0],
  [19, 'Beat#01_1', 't-audio', 68, 0],
  [20, 'hip-hop-dj-scrat...55bpm_F_minor', 't-audio', 48, 0]
];

function panKnob(p) {
  const arc = p > 0 ? '<path stroke="#74d870" d="M13 2A11 11 0 0 1 19 22.200"/>'
    : p < 0 ? '<path stroke="#74d870" d="M13 2A11 11 0 0 0 7 22.200"/>' : '<path stroke="#74d870" stroke-width="1" d="M13 1v3.500"/>';
  const turn = p * 150;
  return `<svg class="tpan" viewBox="0 0 26 26"><path stroke="#3d3d3d" d="M7 22.200A11 11 0 1 1 19 22.200"/>${arc}
    <circle cx="13" cy="13" r="8.500" fill="#a3a3a3" stroke="none"/>
    <path stroke="#111" stroke-width="1.500" transform="rotate(${turn} 13 13)" d="M13 4.500v4"/></svg>`;
}

document.getElementById('heads').innerHTML = tracks.map(([n, name, ic, vol, pan]) => {
  const last = n === 20, stack = ic === 't-stack';
  return `<div class="track${last ? ' current' : ''}"><div class="tnum">${n}</div><div class="tbody">
    <div class="ticon${stack ? ' stack' : ''}">${stack ? icon('right', 'chev') : ''}${icon(ic, ic === 't-keys' ? 'tall' : '')}</div>
    <div class="tinfo"><div class="tlabel">${name}</div><div class="tctl">
      <div class="msr"><button>M</button><button>S</button></div>
      <div class="msr"><button class="${last ? 'armed' : ''}">R</button></div>
      <input type="range" min="0" max="92" value="${vol}" aria-label="${name} volume">${panKnob(pan)}
    </div></div></div></div>`;
}).join('');

// Bar 5 sits 50px into the timeline; one bar is 68px wide
const BAR = 68, barX = n => 50 + (n - 5) * BAR;
let ruler = `<div class="cyc" style="left:${barX(12)}px;width:${BAR * 4}px"></div>`;
for (let n = 4; n <= 18; n++) ruler += `<div class="bar" style="left:${barX(n)}px">${n > 4 ? n : ''}</div>`;
document.getElementById('ruler').innerHTML = ruler;

// Four-bar patterns: start, end, kind, label
const drums = [
  [0, 10, 'a'], [13, 38, 'd', 'Dru'], [51, 61, 't'],
  [68, 80, 'a'], [81, 90, 'b'], [94, 106, 'a'], [111, 119, 'line'], [119, 131, 't'],
  [136, 148, 'a'], [149, 174, 'd', 'Dru'], [179, 187, 'line'], [187, 199, 'n'],
  [204, 216, 'a'], [217, 226, 'b'], [230, 242, 'a'], [247, 255, 'line'], [255, 267, 't']
];
const piano = [
  [0, 17, 'line', '3'], [26, 47, 'line', '3-'], [68, 87, 'line', '3-'], [94, 113, 'line', '3-'],
  [136, 153, 'line', '3'], [162, 170, 'line'], [221, 229, 'line'], [246, 254, 'line']
];
const bottle = [[-8, 0, 'line'], [59, 67, 'line'], [119, 128, 'line']];

const region = (x, w, kind, label = '', round = false) =>
  `<div class="reg${round ? ' round' : ''}" style="left:${x}px;width:${w}px"><div class="nm">${label}</div><div class="body k-${kind}"></div></div>`;

// Only regions inside the visible range are built
const view = document.getElementById('lanes').clientWidth;
const tile = pattern => [1, 5, 9, 13, 17].map(b => pattern
  .filter(([s, e]) => barX(b) + e > 0 && barX(b) + s < view)
  .map(([s, e, k, l]) => region(barX(b) + s, e - s + 1, k, l, !!l)).join('')).join('');

const audio = (bar, name, wave, shift = 0) =>
  `<div class="reg" style="left:${barX(bar) + shift}px;width:${BAR * 4}px"><div class="nm">${name}<i></i></div>
   <div class="body ${wave ? '' : 'k-flat'}">${wave ? icon('waveform') : ''}</div></div>`;
const midi = (bar, name, ys) =>
  `<div class="reg green" style="left:${barX(bar)}px;width:${BAR * 4}px"><div class="nm">${name}</div>
   <div class="body"><svg viewBox="0 0 270 26">${ys.map((y, i) => `<path d="M${i * 67} ${y}h68"/>`).join('')}</svg></div></div>`;

const lanes = [
  tile(drums), tile(piano), tile(bottle),
  audio(12, 'Loop Based Comp#03.2') + audio(16, 'Loop Based Comp#03.4'),
  audio(8, 'Loop Based Comp#07.2', 1) + audio(12, 'Loop Based Comp#07.3', 1) + audio(16, 'Loop Based Comp#07.9', 1),
  audio(8, 'Loop Based Comp#07.11', 1, 1) + audio(12, 'Loop Based Comp#07.10', 1, 1) + audio(16, 'Loop Based Comp#07.12', 1, 1),
  midi(12, 'Inst 1', [10, 19, 13, 10]) + midi(16, 'Inst 1', [10, 19, 13, 10]),
  midi(12, 'Power Pad', [7, 23, 15, 18]) + midi(16, 'Power Pad', [7, 23, 15, 18]),
  '', ''
];
document.getElementById('lanes').innerHTML = lanes.map(l => `<div class="lane">${l}</div>`).join('');

// Channel strip faders with their scales
const major = [2, 20, 54, 72, 83, 97, 108, 120, 126, 137];
const minor = [8, 14, 26, 31, 43, 49, 60, 66, 78, 87, 90, 93, 101, 104, 112, 116, 123, 129, 132, 135];
const tickPath = '<path stroke="#999" d="' + major.map(y => `M4 ${y}.5h11`).join('') + minor.map(y => `M11 ${y}.5h4`).join('') + '"/><path stroke="#fff" d="M4 37.500h11"/>';
document.querySelectorAll('.fader').forEach(f => {
  const nums = [0, 3, 6, 9, 12, 15, 18, 21, 24, 30, 35, 40, 45, 50, 60];
  f.innerHTML = `<svg class="ticks" viewBox="0 0 25 139">${tickPath}</svg>
    <input type="range" min="0" max="105" value="${f.dataset.level}" aria-label="Channel volume">
    <ol class="nums">${nums.map(n => `<li class="${n > 29 ? 'lo' : ''}${n === 30 ? ' gap' : ''}">${n}</li>`).join('')}</ol>
    <div class="dots"></div><div class="meter"></div>`;
});

// Editor ruler: ticks every half beat, one bar is 1209px
const labels = ['1', '', '1 1 3', '', '1 2', '', '1 2 3', '', '1 3', '', '1 3 3', '', '1 4', '', '1 4 3', '', '2'];
document.getElementById('edruler').innerHTML = labels.map((t, i) => {
  const x = Math.round(9 + i * 1209 / 16);
  const cls = i === 0 ? 'first' : i === 16 ? 'full' : i % 4 === 0 ? 'long' : '';
  const lx = i === 0 || i === 16 ? x + 4 : x;
  return `<span class="etick ${cls}" style="left:${x}px"></span>${t ? `<span class="elabel" style="left:${lx}px">${t}</span>` : ''}`;
}).join('');
document.getElementById('edscale').innerHTML = [100, 75, 50, 25, 0, -25, -50, -75, -100].map(v => `<li>${v}</li>`).join('');
```
